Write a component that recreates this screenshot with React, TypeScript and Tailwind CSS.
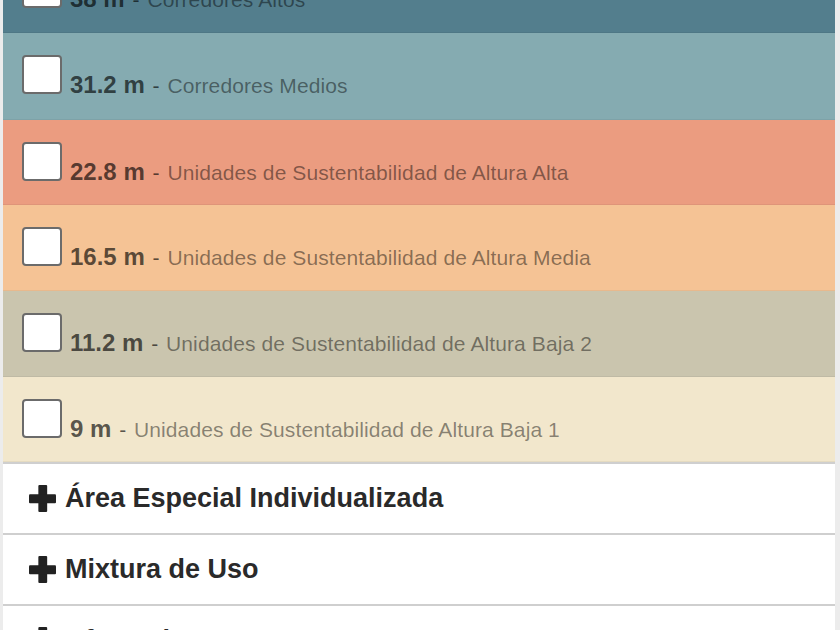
import React from "react";

const heights = [
  { value: "38 m", label: "Corredores Altos", bg: "bg-[#537e8d]", h: "h-[86px]" },
  { value: "31.2 m", label: "Corredores Medios", bg: "bg-[#85abb1]", h: "h-[87px]" },
  { value: "22.8 m", label: "Unidades de Sustentabilidad de Altura Alta", bg: "bg-[#eb9c80]", h: "h-[85px]" },
  { value: "16.5 m", label: "Unidades de Sustentabilidad de Altura Media", bg: "bg-[#f5c395]", h: "h-[86px]" },
  { value: "11.2 m", label: "Unidades de Sustentabilidad de Altura Baja 2", bg: "bg-[#cac5ae]", h: "h-[86px]" },
  { value: "9 m", label: "Unidades de Sustentabilidad de Altura Baja 1", bg: "bg-[#f2e7cc]", h: "h-[85px]" },
];

const sections = ["Área Especial Individualizada", "Mixtura de Uso", "Afectaciones"];

function PlusIcon() {
  return (
    <svg width="27" height="27" viewBox="0 0 26 26" className="shrink-0">
      <rect x="9" y="0" width="8.5" height="26" rx="1" fill="#222" />
      <rect x="0" y="9" width="26" height="8.5" rx="1" fill="#222" />
    </svg>
  );
}

export default function App() {
  return (
    <div className="h-[630px] w-[840px] overflow-hidden bg-[#ececec] font-['Liberation_Sans',Arial,sans-serif]">
      <div className="-mt-[53px] ml-[3px] mr-[5px] flex flex-col">
        {heights.map((row) => (
          <div
            key={row.value}
            className={`${row.bg} ${row.h} flex items-start border-b border-black/5 pl-[19px] pt-[22px]`}
          >
            <span className="h-[39px] w-[40px] shrink-0 rounded-[4px] border-2 border-[#6b6b6b] bg-white" />
            <span className="ml-[8px] mt-[18px] whitespace-nowrap leading-[24px]">
              <span className="text-[24px] font-bold text-black/65">{row.value}</span>
              <span className="px-[2px] text-[21px] text-black/65"> - </span>
              <span className="text-[21px] tracking-[0.1px] text-black/45">{row.label}</span>
            </span>
          </div>
        ))}
        {sections.map((s) => (
          <div
            key={s}
            className="flex h-[71px] items-center gap-[9px] border-t-2 border-[#cfcfcf] bg-white pl-[26px]"
          >
            <PlusIcon />
            <span className="text-[27px] font-bold text-[#2a2a2a]">{s}</span>
          </div>
        ))}
      </div>
    </div>
  );
}
